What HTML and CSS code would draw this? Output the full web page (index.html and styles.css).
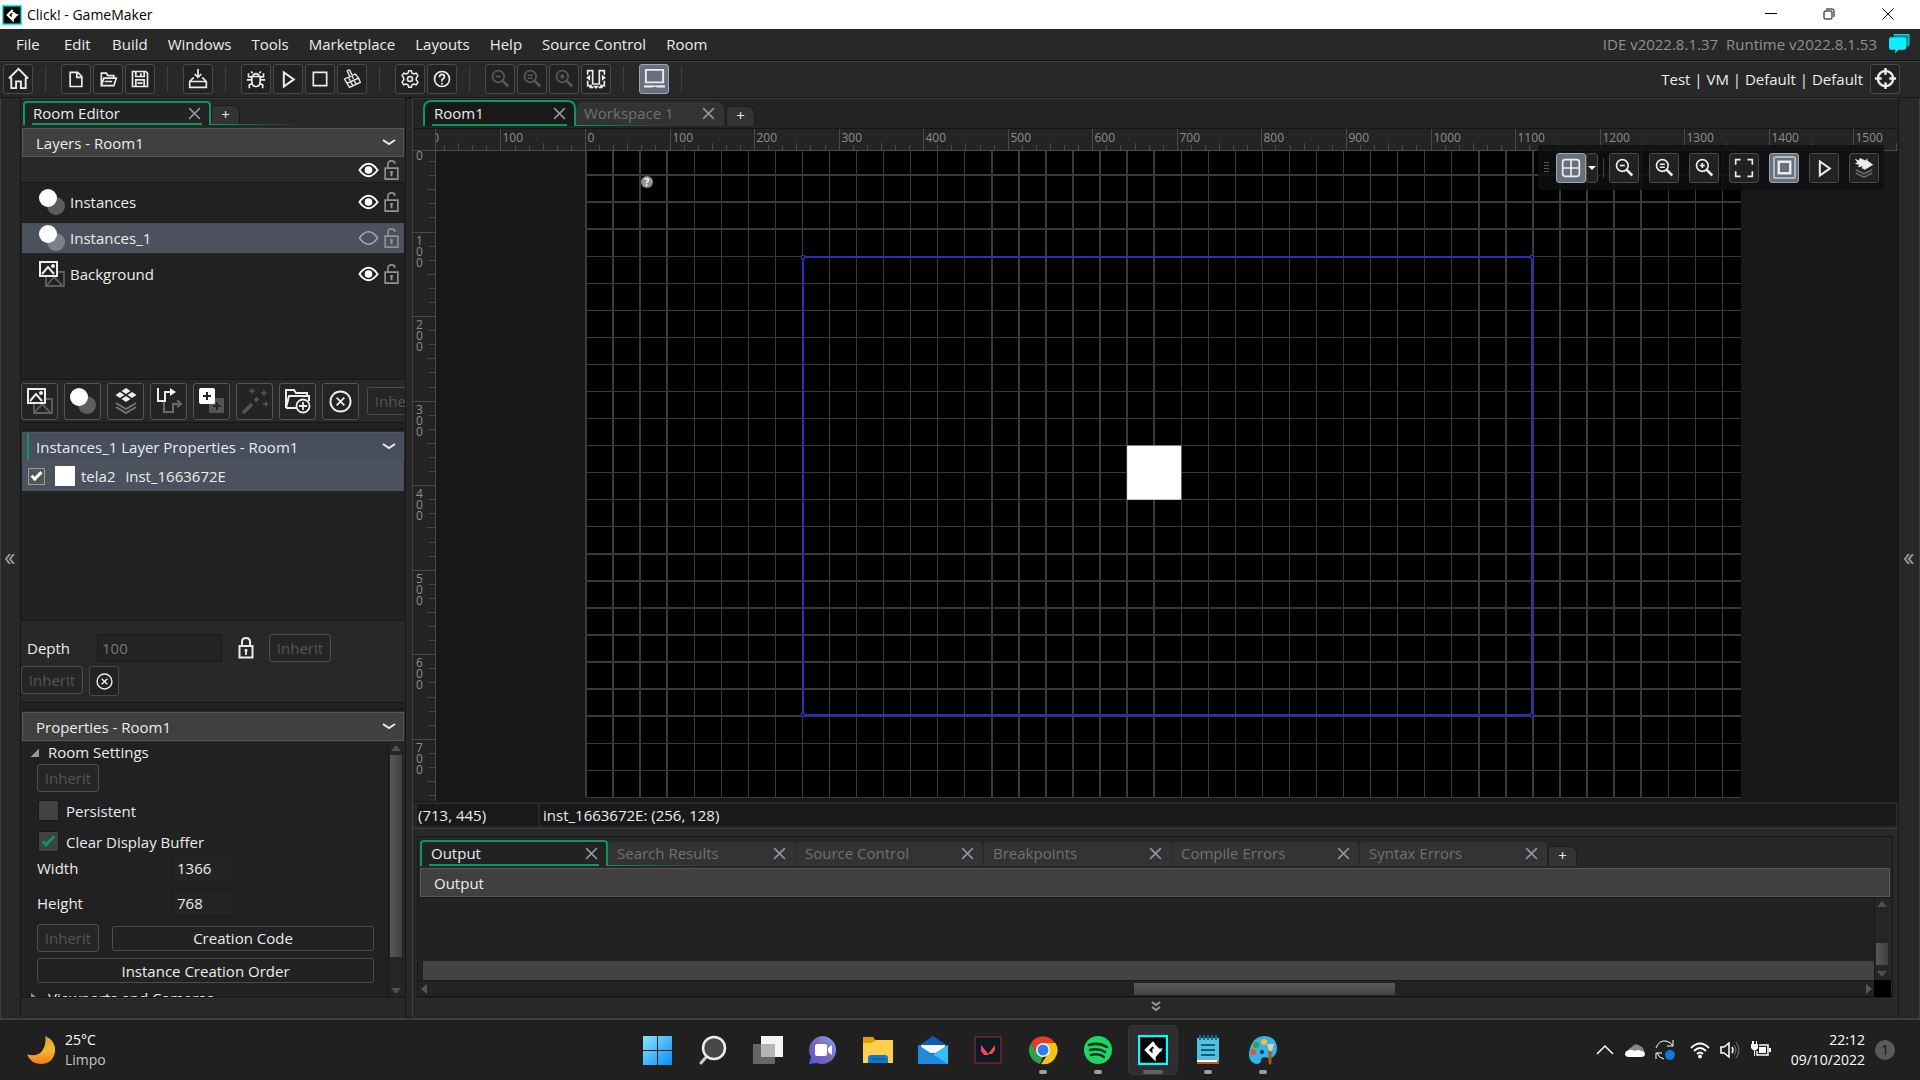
FILE: index.html
```html
<!DOCTYPE html>
<html lang="en">
<head>
    <meta charset="UTF-8">
    <title>Click! - GameMaker</title>
    <link rel="stylesheet" href="styles.css">
</head>
<body>
    <svg class="defs" aria-hidden="true">
        <symbol id="close" viewBox="0 0 14 14"><path d="M2 2l10 10M12 2L2 12"/></symbol>
        <symbol id="chevron" viewBox="0 0 16 16"><path d="M2 5l6 4 6-4" stroke-width="2"/></symbol>
        <symbol id="home" viewBox="0 0 24 24"><path d="M2 12L12 2l10 10M4.500 11v11h5v-7h5v7h5V11" stroke-width="2"/></symbol>
        <symbol id="new" viewBox="0 0 24 24"><path d="M5 4h9l5 5v12H5zM13 4v6h6" stroke-width="2"/></symbol>
        <symbol id="open" viewBox="0 0 24 24"><path d="M4 20V5h6l2 3h7v3M4 20l3-9h15l-3 9zM8 15h9" stroke-width="2"/></symbol>
        <symbol id="save" viewBox="0 0 24 24"><path d="M3 3h16l2 2v16H3zM7 3v6h10V3M7 21v-8h10v8M9 17h6M13 5v3" stroke-width="2"/></symbol>
        <symbol id="package" viewBox="0 0 24 24"><path d="M7 10L2 15v7h20v-7l-5-5M2 15h20M12 0v9M8 6l4 4 4-4" stroke-width="2"/></symbol>
        <symbol id="bug" viewBox="0 0 24 24"><path d="M7 9h10v6q0 6-5 6t-5-6zM8 8q4-5 8 0M8 5L6 3M16 5l2-2M7 10L3 9V5M17 10l4-1V5M7 13H1M17 13h6M8 17l-4 2v4M16 17l4 2v4" stroke-width="2"/></symbol>
        <symbol id="play" viewBox="0 0 24 24"><path d="M7 4v17L19 12.500z" stroke-width="2.400"/></symbol>
        <symbol id="stop" viewBox="0 0 24 24"><path d="M4 4h16v16H4z" stroke-width="2"/></symbol>
        <symbol id="clean" viewBox="0 0 24 24"><path d="M6 2l4 8M9 1l4 8M6 2l3-1M3 12l13-6 4 5-14 6zM6 17l3 5 13-6-2-5M10 15l3 5M14 13l3 5M8 11l2 3M12 9l2 3" stroke-width="1.600"/></symbol>
        <symbol id="gear" viewBox="0 0 24 24"><circle cx="12" cy="12" r="3" stroke-width="2"/><path d="M9.500 5l1-3h3l1 3 2 1 3-1 2 3-2 3v2l2 3-2 3-3-1-2 1-1 3h-3l-1-3-2-1-3 1-2-3 2-3v-2L2.500 8l2-3 3 1z" stroke-width="1.800"/></symbol>
        <symbol id="help" viewBox="0 0 24 24"><circle cx="12" cy="12" r="9" stroke-width="2"/><path d="M9 10q0-3.500 3-3.500T15 9.500q0 1.500-3 3V15M12 16.500v2" stroke-width="2"/></symbol>
        <symbol id="zoom-out" viewBox="0 0 24 24"><circle cx="10" cy="9" r="7" stroke-width="2"/><path d="M7 9h6" stroke-width="2"/><path d="M15 14l7 7" stroke-width="3"/></symbol>
        <symbol id="zoom-reset" viewBox="0 0 24 24"><circle cx="10" cy="9" r="7" stroke-width="2"/><path d="M7 7.500h6M7 11h6" stroke-width="1.800"/><path d="M15 14l7 7" stroke-width="3"/></symbol>
        <symbol id="zoom-in" viewBox="0 0 24 24"><circle cx="10" cy="9" r="7" stroke-width="2"/><path d="M7 9h6M10 6v6" stroke-width="2"/><path d="M15 14l7 7" stroke-width="3"/></symbol>
        <symbol id="dock" viewBox="0 0 24 24"><path d="M2 7V2h6v16h8V2h6v5M2 14v6h5M22 14v6h-5M5 20v2h4M19 20v2h-4" stroke-width="2"/><path d="M5 7v7l-5-3.500zM19 7v7l5-3.500zM8.500 20h7L12 24z" fill="currentColor" stroke="none"/></symbol>
        <symbol id="laptop" viewBox="0 0 24 24"><path d="M3 3h18v13H3zM1 20.500h9M14 20.500h9" stroke-width="2"/><path d="M1 20h22" stroke-width="1.500"/></symbol>
        <symbol id="target" viewBox="0 0 24 24"><circle cx="12" cy="12" r="8" stroke-width="2.500"/><path d="M12 1v7M12 16v7M1 12h7M16 12h7" stroke-width="2.500"/></symbol>
        <symbol id="eye" viewBox="0 0 22 16"><path d="M1.500 8Q6 1.500 11 1.500T20.500 8Q16 14.500 11 14.500T1.500 8z" stroke-width="2"/><circle cx="11" cy="8" r="4" fill="currentColor" stroke="none"/></symbol>
        <symbol id="eye-off" viewBox="0 0 22 16"><path d="M1.500 8Q6 1.500 11 1.500T20.500 8Q16 14.500 11 14.500T1.500 8z" stroke-width="1.500"/></symbol>
        <symbol id="unlock" viewBox="0 0 16 22"><path d="M1 9h14v12H1zM4 9V5q0-4 4-4 3 0 4 3" stroke-width="1.800"/><path d="M8 12v6M6.500 13.500h3" stroke-width="2"/></symbol>
        <symbol id="lock" viewBox="0 0 16 22"><path d="M1.500 9h13v11.500h-13zM4 9V5q0-4 4-4t4 4v4" stroke-width="2"/><path d="M8 12v6M6.500 13.500h3" stroke-width="1.800"/></symbol>
        <symbol id="layer-inst" viewBox="0 0 26 26"><circle cx="17" cy="17" r="9" fill="#fff" opacity=".27" stroke="none"/><circle cx="9" cy="9" r="9" fill="#fff" stroke="none"/></symbol>
        <symbol id="layer-bg" viewBox="0 0 26 26"><g opacity=".3"><path d="M7 11h18v14H7zM8 24l7-8 8 8" stroke-width="1.800"/></g><path d="M1 1h17v14H1z" fill="#222" stroke-width="2"/><path d="M3 13l6-7 6 7" stroke-width="2"/><circle cx="14" cy="5" r="2" fill="currentColor" stroke="none"/></symbol>
        <symbol id="layer-tile" viewBox="0 0 26 26"><path d="M3 15l10 6 10-6M3 19l10 6 10-6" opacity=".4" stroke-width="2"/><path d="M13 0l4.500 3-4.500 3-4.500-3zM7 4l4.500 3L7 10 2.500 7zM19 4l4.500 3-4.500 3-4.500-3zM13 8l4.500 3-4.500 3-4.500-3z" fill="currentColor" stroke="none"/></symbol>
        <symbol id="layer-path" viewBox="0 0 26 26"><path d="M8 13v11h9v-8h6M21 12l4 4-4 3" opacity=".35" stroke-width="2"/><path d="M2 0v13h7V4h6" stroke-width="2"/><path d="M14 0l6 4-6 4z" fill="currentColor" stroke="none"/></symbol>
        <symbol id="layer-asset" viewBox="0 0 26 26"><path d="M10 10h15v15H10z" fill="#555" stroke="none"/><path d="M18 14v8M14 18h8" stroke="#262626" stroke-width="2"/><rect width="16" height="16" rx="2" fill="#fff" stroke="none"/><path d="M8 4v8M4 8h8" stroke="#222" stroke-width="2"/></symbol>
        <symbol id="wand" viewBox="0 0 26 26"><path d="M1 25l9-9M13 13l3-3" stroke-width="3.500"/><path d="M10-1l1 3 3 1-3 1-1 3-1-3-3-1 3-1zM22 1l1 3 3 1-3 1-1 3-1-3-3-1 3-1zM24 13l1 2 2 1-2 1-1 3-1-3-3-1 3-1z" fill="currentColor" stroke="none"/></symbol>
        <symbol id="folder-add" viewBox="0 0 26 26"><path d="M1 20V2h8l2 3h11v3M1 20L4 8h20v5M1 20h12" stroke-width="2"/><circle cx="18" cy="18" r="6.500" fill="#222" stroke-width="1.800"/><path d="M18 14v8M14 18h8" stroke-width="1.800"/></symbol>
        <symbol id="delete" viewBox="0 0 24 24"><circle cx="12" cy="12" r="10.500" stroke-width="2"/><path d="M8 8l8 8M16 8l-8 8" stroke-width="2"/></symbol>
        <symbol id="grid" viewBox="0 0 24 24"><rect x="2" y="2" width="20" height="20" rx="3" stroke-width="2"/><path d="M12 2v20M2 12h20" stroke-width="2"/></symbol>
        <symbol id="fit" viewBox="0 0 24 24"><path d="M2 8V2h6M16 2h6v6M22 16v6h-6M8 22H2v-6" stroke-width="2"/></symbol>
        <symbol id="mask" viewBox="0 0 24 24"><rect x="1" y="1" width="22" height="22" rx="2" opacity=".6" stroke-width="2"/><path d="M6 6h12v12H6z" stroke-width="2.500"/></symbol>
        <symbol id="layers" viewBox="0 0 24 24"><path d="M2 14l10 5 10-5M2 18l10 5 10-5" opacity=".35" stroke-width="2"/><path d="M1 1l5 2 1-3 7 3 2-3v3l7 5-10 6-4-2 2-2-6 1 1-3-5-1 3-2z" fill="currentColor" stroke="none"/></symbol>
        <symbol id="gm" viewBox="0 0 28 28"><path d="M1 1h26v26H1z" fill="#000" stroke="#0ff" stroke-width="2"/><path d="M15 7l-7 7 7 7v-7h4l-5-5M15 20l5-6h-6" stroke="#fff" stroke-width="3"/></symbol>
    </svg>

    <header class="titlebar">
        <svg class="app-icon"><use href="#gm"/></svg>
        <span>Click! - GameMaker</span>
        <div class="window-buttons">
            <button aria-label="Minimize"><svg viewBox="0 0 12 12"><path d="M0 5.500h12"/></svg></button>
            <button aria-label="Restore"><svg viewBox="0 0 12 12"><rect x="1" y="3" width="8" height="8" rx="1"/><path d="M3 1h6q2 0 2 2v6"/></svg></button>
            <button aria-label="Close"><svg viewBox="0 0 12 12"><path d="M.5.5l11 11M11.500.5l-11 11"/></svg></button>
        </div>
    </header>

    <nav class="menubar">
        <button>File</button><button>Edit</button><button>Build</button><button>Windows</button><button>Tools</button><button>Marketplace</button><button>Layouts</button><button>Help</button><button>Source Control</button><button>Room</button>
        <span class="version"><span>IDE v2022.8.1.37</span><span>Runtime v2022.8.1.53</span></span>
        <svg class="chat" viewBox="0 0 22 20"><path d="M5 0h16v13h-4V3H5z" fill="#078d98"/><path d="M5 0h16v11" stroke="#0be8fa"/><path d="M2 3h14q2 0 2 2v9q0 2-2 2h-6l-4 4 1-4H2q-2 0-2-2V5q0-2 2-2z" fill="#0ef0ff"/></svg>
    </nav>

    <div class="toolbar">
        <button class="tool" aria-label="Home"><svg class="wide"><use href="#home"/></svg></button>
        <i class="sep"></i>
        <button class="tool" aria-label="New"><svg><use href="#new"/></svg></button>
        <button class="tool" aria-label="Open"><svg><use href="#open"/></svg></button>
        <button class="tool" aria-label="Save"><svg><use href="#save"/></svg></button>
        <i class="sep"></i>
        <button class="tool" aria-label="Create executable"><svg><use href="#package"/></svg></button>
        <i class="sep"></i>
        <button class="tool" aria-label="Debug"><svg><use href="#bug"/></svg></button>
        <button class="tool" aria-label="Run"><svg><use href="#play"/></svg></button>
        <button class="tool" aria-label="Stop"><svg><use href="#stop"/></svg></button>
        <button class="tool" aria-label="Clean"><svg><use href="#clean"/></svg></button>
        <i class="sep"></i>
        <button class="tool" aria-label="Game options"><svg><use href="#gear"/></svg></button>
        <button class="tool" aria-label="Help"><svg><use href="#help"/></svg></button>
        <i class="sep"></i>
        <button class="tool" aria-label="Zoom out" disabled><svg><use href="#zoom-out"/></svg></button>
        <button class="tool" aria-label="Reset zoom" disabled><svg><use href="#zoom-reset"/></svg></button>
        <button class="tool" aria-label="Zoom in" disabled><svg><use href="#zoom-in"/></svg></button>
        <button class="tool" aria-label="Toggle docks"><svg><use href="#dock"/></svg></button>
        <i class="sep"></i>
        <button class="tool on" aria-label="Laptop mode"><svg class="wide"><use href="#laptop"/></svg></button>
        <i class="sep"></i>
        <span class="targets">Test | VM | Default | Default</span>
        <button class="tool" aria-label="Target manager"><svg class="wide"><use href="#target"/></svg></button>
    </div>

    <main class="workspace">
        <button class="gutter" aria-label="Collapse left dock"><svg class="collapse" viewBox="0 0 10 10"><path d="M5 0L1 5l4 5M9 0L5 5l4 5"/></svg></button>

        <aside class="sidebar">
            <div class="tabs">
                <div class="tab active">Room Editor <button aria-label="Close tab"><svg><use href="#close"/></svg></button></div>
                <button class="add-tab">+</button>
            </div>

            <button class="section-head">Layers - Room1 <svg><use href="#chevron"/></svg></button>
            <div class="layer-all">
                <svg class="eye"><use href="#eye"/></svg><svg class="lock"><use href="#unlock"/></svg>
            </div>
            <ul class="layers">
                <li><svg class="kind"><use href="#layer-inst"/></svg><span>Instances</span><svg class="eye"><use href="#eye"/></svg><svg class="lock"><use href="#unlock"/></svg></li>
                <li class="selected"><svg class="kind"><use href="#layer-inst"/></svg><span>Instances_1</span><svg class="eye off"><use href="#eye-off"/></svg><svg class="lock"><use href="#unlock"/></svg></li>
                <li><svg class="kind"><use href="#layer-bg"/></svg><span>Background</span><svg class="eye"><use href="#eye"/></svg><svg class="lock"><use href="#unlock"/></svg></li>
            </ul>
            <div class="layer-tools">
                <button aria-label="Background layer"><svg><use href="#layer-bg"/></svg></button>
                <button aria-label="Instance layer"><svg><use href="#layer-inst"/></svg></button>
                <button aria-label="Tile layer"><svg><use href="#layer-tile"/></svg></button>
                <button aria-label="Path layer"><svg><use href="#layer-path"/></svg></button>
                <button aria-label="Asset layer"><svg><use href="#layer-asset"/></svg></button>
                <button aria-label="Effect layer" disabled><svg><use href="#wand"/></svg></button>
                <button aria-label="Layer folder"><svg><use href="#folder-add"/></svg></button>
                <button aria-label="Delete layer"><svg class="small"><use href="#delete"/></svg></button>
                <button class="inherit" disabled>Inherit</button>
            </div>
            <div class="splitter"></div>

            <button class="section-head current">Instances_1 Layer Properties - Room1 <svg><use href="#chevron"/></svg></button>
            <div class="instances">
                <label class="instance">
                    <input type="checkbox" class="check" checked>
                    <i class="swatch"></i><span>tela2</span><span>inst_1663672E</span>
                </label>
            </div>
            <div class="depth">
                <div class="depth-row">
                    <label for="depth">Depth</label>
                    <input id="depth" class="field" type="text" value="100" disabled>
                    <svg class="lock-on"><use href="#lock"/></svg>
                    <button class="inherit" disabled>Inherit</button>
                </div>
                <div class="depth-actions">
                    <button class="inherit" disabled>Inherit</button>
                    <button class="tool" aria-label="Delete instance"><svg class="small"><use href="#delete"/></svg></button>
                </div>
            </div>
            <div class="splitter"></div>

            <button class="section-head">Properties - Room1 <svg><use href="#chevron"/></svg></button>
            <div class="properties">
                <div class="form">
                    <div class="group">Room Settings</div>
                    <button class="inherit" disabled>Inherit</button>
                    <label class="tick"><input type="checkbox" class="check green">Persistent</label>
                    <label class="tick"><input type="checkbox" class="check green" checked>Clear Display Buffer</label>
                    <div class="size-row"><label for="width">Width</label><input id="width" class="field" type="text" value="1366"></div>
                    <div class="size-row"><label for="height">Height</label><input id="height" class="field" type="text" value="768"></div>
                    <div class="code-row"><button class="inherit" disabled>Inherit</button><button class="wide-button">Creation Code</button></div>
                    <button class="wide-button">Instance Creation Order</button>
                    <div class="group closed">Viewports and Cameras</div>
                </div>
                <div class="vscroll"><i class="up"></i><b></b><i class="down"></i></div>
            </div>
            <div class="dock-foot"></div>
        </aside>

        <div class="divider"></div>

        <section class="editor">
            <div class="tabs room-tabs">
                <div class="tab active">Room1 <button aria-label="Close tab"><svg><use href="#close"/></svg></button></div>
                <div class="tab">Workspace 1 <button aria-label="Close tab"><svg><use href="#close"/></svg></button></div>
                <button class="add-tab">+</button>
            </div>
            <div class="room-view">
                <svg id="room" class="room"></svg>
                <div class="view-tools">
                    <i class="grip"></i>
                    <div class="grid-group">
                        <button class="tool on" aria-label="Toggle grid"><svg><use href="#grid"/></svg></button>
                        <button class="tool arrow" aria-label="Grid options"></button>
                    </div>
                    <i class="bar"></i>
                    <div class="view-buttons">
                        <button class="tool" aria-label="Zoom out"><svg><use href="#zoom-out"/></svg></button>
                        <button class="tool" aria-label="Reset zoom"><svg><use href="#zoom-reset"/></svg></button>
                        <button class="tool" aria-label="Zoom in"><svg><use href="#zoom-in"/></svg></button>
                        <button class="tool" aria-label="Fit to view"><svg><use href="#fit"/></svg></button>
                        <button class="tool on" aria-label="Toggle mask"><svg class="wide"><use href="#mask"/></svg></button>
                        <button class="tool" aria-label="Play animation"><svg><use href="#play"/></svg></button>
                        <button class="tool" aria-label="Layer view"><svg><use href="#layers"/></svg></button>
                    </div>
                </div>
            </div>
            <div class="status"><span>(713, 445)</span><span>inst_1663672E: (256, 128)</span></div>

            <div class="output">
                <div class="tabs">
                    <div class="tab active">Output <button aria-label="Close tab"><svg><use href="#close"/></svg></button></div>
                    <div class="tab">Search Results <button aria-label="Close tab"><svg><use href="#close"/></svg></button></div>
                    <div class="tab">Source Control <button aria-label="Close tab"><svg><use href="#close"/></svg></button></div>
                    <div class="tab">Breakpoints <button aria-label="Close tab"><svg><use href="#close"/></svg></button></div>
                    <div class="tab">Compile Errors <button aria-label="Close tab"><svg><use href="#close"/></svg></button></div>
                    <div class="tab">Syntax Errors <button aria-label="Close tab"><svg><use href="#close"/></svg></button></div>
                    <button class="add-tab">+</button>
                </div>
                <div class="section-head">Output</div>
                <div class="log">
                    <div class="lines"><div class="line"></div></div>
                    <div class="vscroll"><i class="up"></i><b></b><i class="down"></i></div>
                    <div class="hscroll"><i class="left"></i><b></b><i class="right"></i></div>
                    <div class="corner"></div>
                </div>
            </div>
            <button class="dock-foot" aria-label="Collapse output"><svg class="collapse" viewBox="0 0 10 10"><path d="M1 1l4 3 4-3M1 6l4 3 4-3"/></svg></button>
        </section>

        <button class="gutter right" aria-label="Collapse right dock"><svg class="collapse" viewBox="0 0 10 10"><path d="M5 0L1 5l4 5M9 0L5 5l4 5"/></svg></button>
    </main>

    <footer class="taskbar">
        <div class="weather">
            <svg viewBox="0 0 30 30"><defs><linearGradient id="moon" x2="0" y2="1"><stop stop-color="#d9a441"/><stop offset=".5" stop-color="#f6b62f"/><stop offset="1" stop-color="#f07f1c"/></linearGradient></defs><path d="M19 0q11 5 10 16-2 13-15 13Q4 29 0 19q11 3 16-4 4-6 3-15z" fill="url(#moon)"/></svg>
            <div>25°C<br><span>Limpo</span></div>
        </div>
        <div class="apps">
            <button aria-label="Start"><svg viewBox="0 0 30 30"><defs><linearGradient id="win" x2="1" y2="1"><stop stop-color="#8be3ff"/><stop offset="1" stop-color="#0a8df5"/></linearGradient></defs><path d="M0 1h14v14H0zM15 1h14v14H15zM0 16h14v14H0zM15 16h14v14H15z" fill="url(#win)"/></svg></button>
            <button aria-label="Search"><svg viewBox="0 0 30 30"><path d="M10 20l-7 8" stroke="#c9ced3" stroke-width="3" stroke-linecap="round"/><circle cx="16" cy="13" r="11" fill="#484848" stroke="#eceff1" stroke-width="2.500"/></svg></button>
            <button aria-label="Task view"><svg viewBox="0 0 30 30"><path d="M8 1h22v21H8z" fill="#f4f4f4"/><path d="M0 9h22v20H0z" fill="#666"/><path d="M8 9h14v13H8z" fill="#b5b5b5"/></svg></button>
            <button aria-label="Chat"><svg viewBox="0 0 30 30"><defs><linearGradient id="teams" x1="1" x2="0" y2="1"><stop stop-color="#7ea6f0"/><stop offset=".5" stop-color="#7b68b8"/><stop offset="1" stop-color="#5056d8"/></linearGradient></defs><path d="M15 1a14 14 0 1 1-6 27l-8 1 2-7A14 14 0 0 1 15 1z" fill="url(#teams)"/><rect x="7" y="9" width="12" height="12" rx="2" fill="#fff"/><path d="M20 13l4-3v10l-4-3z" fill="#fff"/></svg></button>
            <button aria-label="Explorer"><svg viewBox="0 0 30 30"><path d="M0 2h10l3 4h17v5H0z" fill="#e0a000"/><path d="M0 8h9l4-3h17v23H0z" fill="#ffd04c"/><path d="M5 28v-5q0-3 3-3h14q3 0 3 3v5z" fill="#1177cc"/><path d="M9 24h12" stroke="#0b4d85"/></svg></button>
            <button aria-label="Mail"><svg viewBox="0 0 30 30"><path d="M0 11L15 1l15 10-15 9z" fill="#0b5cad"/><path d="M3 10h24v8H3z" fill="#f5f5f5"/><path d="M0 10l15 10 15-10v19H0z" fill="#2aa4ea"/><path d="M0 29l30-19v19z" fill="#32bff5"/><path d="M0 10l30 19H0z" fill="#2089dc"/></svg></button>
            <button aria-label="Valorant"><svg viewBox="0 0 30 30"><path d="M2 2h26v26H2z" fill="#0f1923" stroke="#9c2b38"/><path d="M8 10l8 10h-5l-3-4zM22 10v5l-3 4h-4z" fill="#ff4655"/></svg></button>
            <button aria-label="Chrome" class="running"><svg viewBox="0 0 30 30"><path d="M3 8A14 14 0 0 1 27 8z M3 8l6 10 6-10z" fill="#e53a2e"/><path d="M3 8l6 10 6 4-3 7A14 14 0 0 1 3 8z" fill="#2f9f4c"/><path d="M15 8h12.500A14 14 0 0 1 13 29l7-10z" fill="#fbc116"/><circle cx="15" cy="15" r="7" fill="#fff"/><circle cx="15" cy="15" r="5.500" fill="#2f7de9"/></svg></button>
            <button aria-label="Spotify" class="running"><svg viewBox="0 0 30 30"><circle cx="15" cy="15" r="14" fill="#1ed760"/><path d="M6 10q10-3 18 2M7 15q9-2 15 2M8 20q8-2 13 2" stroke="#17331f" stroke-width="2.500" stroke-linecap="round"/></svg></button>
            <button aria-label="GameMaker" class="running active"><svg><use href="#gm"/></svg></button>
            <button aria-label="Notepad" class="running"><svg viewBox="0 0 30 30"><path d="M4 3h22v24H4z" fill="#55bfdf"/><path d="M4 26h22v3H4z" fill="#b5631d"/><path d="M4 25h20v2H4z" fill="#fff"/><path d="M8 10h14M8 15h14M8 20h14" stroke="#0d5e80" stroke-width="2"/><path d="M7 0v5M11 0v5M15 0v5M19 0v5M23 0v5" stroke="#0d6c95" stroke-width="2"/></svg></button>
            <button aria-label="Paint" class="running"><svg viewBox="0 0 30 30"><path d="M17 1q12 1 12 13-1 9-8 9-6-2-8 1 1 5-5 5-8-2-7-12Q4 1 17 1z" fill="#37b1ea"/><circle cx="8" cy="10" r="3" fill="#3fa51c"/><circle cx="16" cy="7" r="3" fill="#ffc01e"/><circle cx="5" cy="17" r="3" fill="#e4562c"/><circle cx="14" cy="17" r="2" fill="#173244"/><path d="M22 15v13" stroke="#a85b14" stroke-width="3" stroke-linecap="round"/><path d="M19 9h7l-2 7h-3z" fill="#e8cba4"/></svg></button>
        </div>
        <div class="tray">
            <svg viewBox="0 0 20 20"><path d="M2 14l8-8 8 8" stroke-width="1.500"/></svg>
            <svg viewBox="0 0 20 20"><path d="M3 12q0-4 4-5 3-5 8-1 4 1 4 6z" fill="#888" stroke="none"/><path d="M4 17q-4 0-4-3 0-3 4-4 3-1 6 1 3-2 6 0 4 0 4 3 0 3-4 3z" fill="#fff" stroke="none"/></svg>
            <svg class="sync" viewBox="0 0 20 20"><path d="M1 8q3-8 10-7 5 1 7 5M18 0v6h-6M1 19v-6h6M2 13q2 5 7 6"/><circle cx="15" cy="15" r="5" fill="#0b7be0" stroke="none"/></svg>
            <svg class="wifi" viewBox="0 0 20 20"><path d="M1 8q9-9 18 0M4 11q6-6 12 0M7 14q3-3 6 0" stroke-width="1.800"/><circle cx="10" cy="16.500" r="1.500" fill="#fff"/></svg>
            <svg viewBox="0 0 20 20"><path d="M1 7h3l5-4v14l-5-4H1zM12 7q2 3 0 6" stroke-width="1.500"/><path d="M14 5q4 5 0 10M16 2q6 8 0 16" opacity=".4"/></svg>
            <svg class="battery" viewBox="0 0 20 20"><path d="M8 5h9v10H6v-4" stroke-width="1.500"/><path d="M8 7h7v6H8zM18 8h2v4h-2zM0 4h7v4q-3 5-7 0zM1 1h2v3H1zM5 1h1v3H5zM3 9h1v7H3z" fill="#fff" stroke="none"/></svg>
            <time>22:12<br>09/10/2022</time>
            <span class="badge">1</span>
        </div>
    </footer>

    <script src="room.js"></script>
</body>
</html>
```
FILE: styles.css
```css
* {
    box-sizing: border-box;
}

body {
    margin: 0;
    height: 100vh;
    display: flex;
    flex-direction: column;
    overflow: hidden;
    background: #282828;
    color: #ececec;
    font: 15px/20px "Open Sans", "Noto Sans", sans-serif;
}

svg {
    fill: none;
    stroke: currentColor;
    flex: none;
}

.defs {
    position: absolute;
    width: 0;
    height: 0;
}

button,
input {
    font: inherit;
    color: inherit;
    margin: 0;
    padding: 0;
    border: 0;
    background: none;
}

/* title bar */
.titlebar {
    height: 29px;
    display: flex;
    align-items: center;
    gap: 5px;
    padding-left: 2px;
    background: #fff;
    color: #000;
    font-size: 14px;
}

.app-icon {
    width: 20px;
    height: 20px;
}

.window-buttons {
    margin-left: auto;
    display: flex;
}

.window-buttons button {
    width: 58px;
    height: 29px;
}

.window-buttons button:last-child {
    width: 62px;
    padding-right: 2px;
}

.window-buttons svg {
    width: 12px;
    height: 12px;
}

/* menu */
.menubar {
    height: 32px;
    display: flex;
    align-items: center;
    padding: 0 10px 2px 6px;
    border-bottom: 1px solid #161616;
}

.menubar button {
    min-width: 48px;
    padding: 0 10px;
    text-align: left;
}

.version {
    margin-left: auto;
    display: flex;
    gap: 8px;
    color: #909090;
}

.chat {
    width: 21px;
    height: 20px;
    margin-left: 12px;
    stroke: none;
}

/* toolbar */
.toolbar {
    height: 37px;
    display: flex;
    align-items: center;
    gap: 2px;
    padding: 0 20px 2px 3px;
    border-top: 1px solid #3a3a3a;
    border-bottom: 1px solid #181818;
}

.tool {
    width: 30px;
    height: 30px;
    flex: none;
    display: flex;
    align-items: center;
    justify-content: center;
    background: #222;
    border: 1px solid #4a4a4a;
    border-radius: 3px;
}

.tool svg {
    width: 20px;
    height: 20px;
}

.tool .wide {
    width: 23px;
    height: 23px;
}

.tool .small {
    width: 17px;
    height: 17px;
}

.tool:disabled {
    color: #5a5a5a;
}

.tool.on {
    background: #687080;
    border-color: #a0a6b0;
}

.sep {
    width: 1px;
    height: 26px;
    margin: 0 13px 0 10px;
    background: #404040;
}

.targets {
    margin: 0 5px 0 auto;
}

/* workspace */
.workspace {
    flex: 1;
    min-height: 0;
    display: flex;
    border-bottom: 2px solid #3e3e3e;
}

.gutter {
    width: 21px;
    padding: 2px 7px 0 4px;
    border-left: 1px solid #3e3e3e;
    border-right: 1px solid #161616;
    color: #999;
}

.gutter.right {
    width: 22px;
    padding: 2px 6px 0 5px;
    border-left-color: #161616;
    border-right-color: #3e3e3e;
}

.collapse {
    display: block;
    width: 10px;
    height: 10px;
    margin: 0 auto;
    stroke-width: 2;
}

.sidebar {
    width: 384px;
    min-width: 0;
    display: flex;
    flex-direction: column;
    border-top: 1px solid #3a3a3a;
}

.divider {
    width: 8px;
    border: 1px solid #161616;
    border-right-color: #404040;
}

.editor {
    flex: 1;
    min-width: 0;
    display: flex;
    flex-direction: column;
}

.tabs {
    height: 31px;
    flex: none;
    display: flex;
    align-items: flex-end;
    padding: 0 0 3px 2px;
}

.sidebar .tabs {
    height: 29px;
}

.tab {
    position: relative;
    width: 187px;
    height: 24px;
    margin-right: 1px;
    padding: 0 8px 2px 9px;
    display: flex;
    align-items: center;
    justify-content: space-between;
    border-radius: 4px 4px 0 0;
    background: #333;
    color: #717171;
}

.tab svg {
    display: block;
    width: 15px;
    height: 15px;
    color: #8c96a6;
    stroke-width: 1.5;
}

.tab.active {
    width: 188px;
    margin-right: 0;
    padding: 0 7px 2px 8px;
    background: #222;
    color: #ececec;
    border: solid #0b995b;
    border-width: 2px 2px 0;
}

.tab.active::before {
    content: "";
    position: absolute;
    left: 7px;
    right: 7px;
    bottom: 0;
    height: 2px;
    background: #0b995b;
}

/* the green edge fades out under the next tab */
.tab.active::after {
    content: "";
    position: absolute;
    z-index: 1;
    left: 100%;
    bottom: 0;
    width: 100px;
    height: 1px;
    background: linear-gradient(90deg, #0b995b, transparent);
}

.add-tab {
    width: 29px;
    height: 20px;
    background: #333;
    border: 1px solid #1b1b1b;
    border-bottom: 0;
    border-radius: 3px 7px 0 0;
    line-height: 16px;
    padding-bottom: 3px;
}

.section-head {
    height: 29px;
    flex: none;
    margin: 0 1px;
    padding: 0 6px 0 13px;
    display: flex;
    align-items: center;
    justify-content: space-between;
    background: #404040;
    border: 1px solid #565656;
    text-align: left;
}

.section-head svg {
    width: 16px;
    height: 16px;
}

.section-head.current {
    background: #474e5c;
    border-color: #505867;
    box-shadow: inset 4px 0 #474e5c, inset 6px 0 #0b995b;
}

/* layers */
.layer-all {
    height: 25px;
    flex: none;
    display: flex;
    align-items: center;
    justify-content: flex-end;
    gap: 5px;
    padding-right: 6px;
}

.eye {
    width: 21px;
    height: 16px;
    color: #fff;
}

.eye.off {
    color: #a5a9b0;
}

.lock {
    width: 15px;
    height: 20px;
    color: #929292;
}

.layers {
    flex: 192 1 0;
    min-height: 0;
    margin: 0;
    padding: 4px 1px 0;
    list-style: none;
    background: #212121;
    border: solid #181818;
    border-width: 1px 0;
}

.layers li {
    height: 30px;
    margin-bottom: 6px;
    padding: 0 5px 0 17px;
    display: flex;
    align-items: center;
    gap: 5px;
}

.layers li span {
    flex: 1;
}

.layers .selected {
    background: #4b525e;
}

.kind {
    width: 26px;
    height: 26px;
}

.layer-tools {
    height: 42px;
    flex: none;
    display: flex;
    align-items: center;
    gap: 6px;
    overflow: hidden;
}

.layer-tools button {
    width: 37px;
    height: 37px;
    flex: none;
    display: flex;
    align-items: center;
    justify-content: center;
    background: #242424;
    border: 1px solid #555;
    border-radius: 3px;
}

.layer-tools button:disabled {
    color: #555;
}

.layer-tools svg {
    width: 26px;
    height: 26px;
}

.layer-tools .small {
    width: 23px;
    height: 23px;
}

.inherit,
.layer-tools .inherit {
    width: 62px;
    height: 28px;
    display: block;
    flex: none;
    background: #252525;
    border: 1px solid #4c4c4c;
    border-radius: 3px;
    color: #555;
}

.layer-tools .inherit {
    margin-left: 2px;
}

.splitter {
    height: 8px;
    flex: none;
    margin: 0 1px 2px;
    background: #222;
    border: solid #131313;
    border-width: 1px 0;
}

/* layer properties */
.instances {
    flex: 159 1 0;
    min-height: 0;
    padding: 0 1px;
    background: #212121;
    border-bottom: 1px solid #181818;
}

.instance {
    height: 30px;
    display: flex;
    align-items: center;
    padding-left: 6px;
    background: #4b525e;
}

.instance span {
    margin-right: 10px;
}

.swatch {
    width: 20px;
    height: 20px;
    margin: 0 6px 0 10px;
    background: #fff;
}

.check {
    appearance: none;
    width: 17px;
    height: 17px;
    position: relative;
    background: #555;
    border: 1px solid #9a9a9a;
    color: #fff;
}

.check:checked::after {
    content: "";
    position: absolute;
    left: 2px;
    top: 3px;
    width: 8px;
    height: 3px;
    border: solid currentColor;
    border-width: 0 0 3px 3px;
    transform: rotate(-45deg);
}

.check.green {
    width: 21px;
    height: 21px;
    background: #414342;
    border-color: #181818;
    border-radius: 2px;
    color: #0b995b;
}

.check.green:checked::after {
    left: 3px;
    top: 5px;
    width: 10px;
    height: 3px;
}

.field {
    height: 28px;
    padding: 0 4px;
    background: #232323;
    border: 1px solid #1a1a1a;
    border-radius: 2px;
}

.field:disabled {
    color: #777;
}

.depth {
    height: 81px;
    flex: none;
    padding-top: 13px;
}

.depth-row {
    display: flex;
    align-items: center;
    padding-left: 6px;
}

.depth-row label {
    width: 70px;
}

.depth-row .field {
    width: 125px;
}

.lock-on {
    width: 16px;
    height: 22px;
    margin: 0 15px 0 16px;
}

.depth-actions {
    display: flex;
    gap: 6px;
    margin-top: 4px;
}

/* room properties */
.properties {
    flex: 255 1 0;
    min-height: 0;
    display: flex;
    margin-top: 1px;
    background: #212121;
    border-bottom: 1px solid #161616;
}

.form {
    flex: 1;
    min-width: 0;
    overflow: hidden;
    padding: 0 14px 0 16px;
}

.group {
    position: relative;
    height: 22px;
    padding-left: 11px;
}

.group::before {
    content: "";
    position: absolute;
    left: -6px;
    top: 7px;
    width: 8px;
    height: 8px;
    background: linear-gradient(135deg, transparent 50%, #8c96a6 50%);
}

.group.closed::before {
    top: 5px;
    width: 6px;
    height: 10px;
    background: #8c96a6;
    clip-path: polygon(0 0, 100% 50%, 0 100%);
}

.tick {
    display: flex;
    align-items: center;
    gap: 7px;
    height: 21px;
    margin: 8px 0 0 1px;
}

.tick + .tick {
    margin: 10px 0 2px 1px;
}

.size-row {
    display: flex;
    align-items: center;
    margin-bottom: 7px;
}

.size-row label {
    width: 135px;
}

.size-row .field {
    width: 62px;
}

.code-row {
    display: flex;
    gap: 13px;
    align-items: center;
    margin-bottom: 6px;
}

.wide-button {
    width: 100%;
    height: 25px;
    line-height: 22px;
    border: 1px solid #4c4c4c;
    border-radius: 3px;
    background: #222;
}

.form > .wide-button {
    display: block;
    margin-bottom: 5px;
}

.code-row .wide-button {
    flex: 1;
}

.vscroll {
    width: 17px;
    padding: 3px 4px 3px 1px;
    display: flex;
    flex-direction: column;
    align-items: center;
    background: #252525;
    border-left: 1px solid #181818;
}

.vscroll i,
.hscroll i {
    border: 5px solid transparent;
}

.vscroll .up {
    border-top: 0;
    border-bottom: 6px solid #505050;
}

.vscroll .down {
    margin-top: auto;
    border-bottom: 0;
    border-top: 6px solid #505050;
}

.vscroll b {
    width: 12px;
    height: 81%;
    margin-top: 4px;
    background: linear-gradient(90deg, #585858, #404040);
}

.dock-foot {
    height: 20px;
    flex: none;
    padding-bottom: 6px;
    border-top: 1px solid #303030;
    color: #999;
}

/* room editor */
.room-tabs {
    padding: 0 0 2px 10px;
    background: #242424;
    border-top: 1px solid #3a3a3a;
    border-bottom: 1px solid #161616;
}

.room-tabs .tab {
    width: 148px;
    margin-right: 2px;
    border-radius: 8px 8px 0 0;
    padding-left: 8px;
}

.room-tabs .tab.active {
    width: 153px;
    height: 26px;
    margin-right: 0;
    padding-left: 9px;
    background: #191919;
}

.room-view {
    position: relative;
    flex: 1;
    min-height: 0;
    background: #181818;
}

.room {
    position: absolute;
    inset: 0;
    width: 100%;
    height: 100%;
    font-size: 12px;
}

.room text {
    fill: #8e8e8e;
    stroke: none;
}

.view-tools {
    position: absolute;
    top: 16px;
    right: 14px;
    height: 45px;
    display: flex;
    align-items: center;
    padding: 0 5px 0 6px;
    background: rgba(15, 15, 15, .86);
    border-radius: 3px;
}

.grip {
    width: 5px;
    height: 12px;
    margin-right: 7px;
    background: repeating-linear-gradient(#555 0 1px, transparent 1px 3px);
}

.grid-group {
    display: flex;
}

.tool.arrow {
    width: 12px;
}

.tool.arrow::after {
    content: "";
    border: 4px solid transparent;
    border-bottom: 0;
    border-top-color: #fff;
}

.bar {
    width: 1px;
    height: 20px;
    margin: 0 5px;
    background: #444;
}

.view-buttons {
    display: flex;
    gap: 10px;
}

.status {
    height: 28px;
    flex: none;
    display: flex;
    gap: 2px;
    padding: 2px 2px 2px 4px;
    line-height: 22px;
    background: #282828;
    border-top: 1px solid #161616;
    border-bottom: 1px solid #3e3e3e;
}

.status span {
    width: 121px;
    padding-left: 1px;
    background: #191919;
    border-radius: 2px;
}

.status span + span {
    width: auto;
    flex: 1;
    padding-left: 3px;
}

/* output */
.output {
    flex: none;
    margin: 7px 5px 0 4px;
    padding: 0 1px;
    background: #262626;
    border: 1px solid #181818;
}

.output .tabs {
    padding-bottom: 2px;
    padding-left: 1px;
}

.output .tab.active {
    height: 26px;
    padding-left: 9px;
}

.log {
    display: grid;
    grid-template-columns: 1fr 17px;
    grid-template-rows: 82px 17px;
    border-top: 1px solid #181818;
    background: #222;
}

.lines {
    display: flex;
    align-items: flex-end;
    padding-left: 4px;
}

.line {
    flex: 1;
    height: 19px;
    background: #434343;
}

.log .vscroll b {
    height: 22px;
    margin-top: 36px;
}

.hscroll {
    display: flex;
    align-items: center;
    padding: 1px 2px;
    background: #232323;
    border: solid #181818;
    border-width: 1px 0;
}

.hscroll .left {
    border-left: 0;
    border-right: 6px solid #555;
}

.hscroll .right {
    margin-left: auto;
    border-right: 0;
    border-left: 6px solid #555;
}

.hscroll b {
    width: 18%;
    height: 12px;
    margin-left: 48.7%;
    background: linear-gradient(#585858, #444);
}

.corner {
    background: #000;
}

/* taskbar */
.taskbar {
    height: 60px;
    display: grid;
    grid-template-columns: 1fr auto 1fr;
    align-items: center;
    background: #202020;
    font-size: 14px;
}

.weather {
    display: flex;
    align-items: center;
    gap: 9px;
    padding-left: 27px;
    color: #fff;
}

.weather svg {
    width: 29px;
    height: 29px;
    stroke: none;
}

.weather span {
    color: #c4c4c4;
}

.apps {
    display: flex;
    gap: 5px;
}

.apps button {
    position: relative;
    width: 50px;
    height: 50px;
    display: flex;
    align-items: center;
    justify-content: center;
    border-radius: 5px;
}

.apps svg {
    width: 30px;
    height: 30px;
    stroke: none;
}

.apps .active {
    background: #2e2e2e;
    border: 1px solid #373737;
}

.running::after {
    content: "";
    position: absolute;
    bottom: 1px;
    width: 8px;
    height: 4px;
    border-radius: 2px;
    background: #a0a0a0;
}

.running.active::after {
    bottom: 0;
    width: 20px;
    background: #626262;
}

.tray {
    justify-self: end;
    display: flex;
    align-items: center;
    gap: 10px;
    padding-right: 25px;
    color: #fff;
}

.tray svg {
    width: 20px;
    height: 20px;
}

.tray .sync {
    margin-right: 5px;
}

.tray .battery {
    margin: 0 10px 0 1px;
}

.tray time {
    text-align: right;
}

.badge {
    width: 20px;
    height: 20px;
    border-radius: 50%;
    background: #5a5a5a;
    color: #161616;
    text-align: center;
}
```
FILE: room.js
```js
// room canvas: rulers, grid, instances
const svg = document.getElementById("room");
const zoom = 0.8455;
const ox = 173;
const oy = 19;
const ruler = { w: 23, h: 22 };
const room = { w: 1366, h: 768, grid: 32 };

function add(tag, attrs, text) {
    const el = document.createElementNS("http://www.w3.org/2000/svg", tag);
    for (const key in attrs) el.setAttribute(key, attrs[key]);
    if (text !== undefined) el.textContent = text;
    svg.appendChild(el);
    return el;
}

function line(x1, y1, x2, y2, color, width = 1) {
    add("path", { d: `M${x1} ${y1}L${x2} ${y2}`, stroke: color, "stroke-width": width, "shape-rendering": "crispEdges" });
}

function px(v) {
    return Math.round(v) - 0.5;
}

function draw() {
    svg.innerHTML = "";
    const w = svg.clientWidth;
    const h = svg.clientHeight;
    const right = ox + room.w * zoom;
    const bottom = oy + room.h * zoom;

    add("rect", { x: ox, y: oy, width: room.w * zoom, height: room.h * zoom, fill: "#000", stroke: "none" });
    for (let x = 0; x < room.w; x += room.grid) line(ox + x * zoom, oy, ox + x * zoom, bottom, "#3a3a3a", 1.4);
    for (let y = 0; y <= room.h; y += room.grid) line(ox, oy + y * zoom, right, oy + y * zoom, "#3a3a3a", 1.4);

    // object without sprite
    add("circle", { cx: ox + 61, cy: oy + 34, r: 6, fill: "#929292", stroke: "none" });
    const mark = add("text", { x: ox + 61, y: oy + 38, "text-anchor": "middle", "font-size": 10, "font-weight": 700 }, "?");
    mark.style.fill = "#fff";

    add("rect", { x: ox + 640 * zoom, y: oy + 352 * zoom, width: 64 * zoom, height: 64 * zoom, fill: "#fff", stroke: "none" });

    // camera instance outline
    const cx = Math.ceil(ox + 256 * zoom);
    const cy = Math.ceil(oy + 128 * zoom);
    add("rect", { x: cx, y: cy, width: 729, height: 458, stroke: "#2d2dbb", "stroke-width": 2 });
    [[cx, cy], [cx + 729, cy], [cx, cy + 458], [cx + 729, cy + 458]].forEach(([x, y]) => {
        add("rect", { x: x - 1.5, y: y - 1.5, width: 3, height: 3, fill: "#111", stroke: "#2d2dbb" });
    });

    // rulers
    add("rect", { x: 0, y: 0, width: w, height: ruler.h, fill: "#242424", stroke: "none" });
    for (let i = -12; ox + i * 100 * zoom / 6 < w; i++) {
        const x = px(ox + i * 100 * zoom / 6);
        const major = i % 6 === 0;
        line(x, major ? 0 : i % 3 === 0 ? 14 : 16, x, ruler.h, "#4a4a4a");
        if (major) add("text", { x: x + 2, y: 13 }, Math.abs(i / 6 * 100));
    }
    add("rect", { x: 0, y: 0, width: ruler.w, height: h, fill: "#242424", stroke: "none" });
    for (let i = 0; oy + i * 100 * zoom / 6 < h; i++) {
        const y = px(oy + i * 100 * zoom / 6);
        const major = i % 6 === 0;
        if (i > 0) line(major ? 0 : i % 3 === 0 ? 14 : 16, y, ruler.w, y, "#4a4a4a");
        if (major) {
            String(i / 6 * 100).split("").forEach((digit, n) => add("text", { x: 3, y: y + 12 + n * 11 }, digit));
        }
    }
    line(ruler.w - 0.5, 0, ruler.w - 0.5, h, "#4a4a4a");
    line(0, ruler.h - 0.5, w, ruler.h - 0.5, "#4a4a4a");
}

draw();
window.addEventListener("resize", draw);
```
